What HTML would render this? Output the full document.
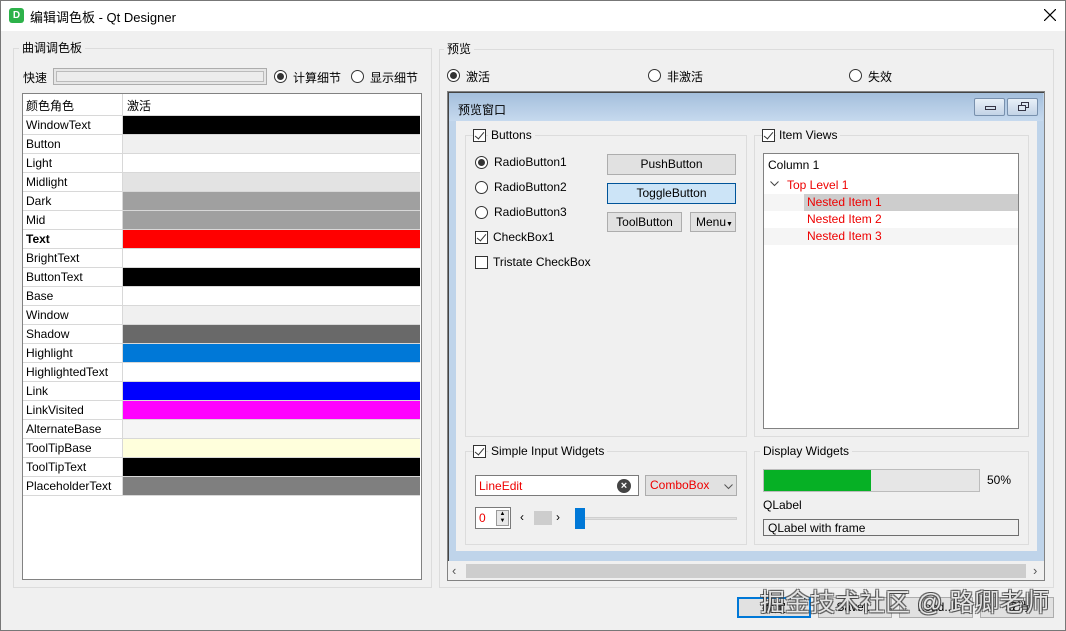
<!DOCTYPE html>
<html><head><meta charset="utf-8"><style>
*{box-sizing:border-box;margin:0;padding:0}
body{width:1066px;height:631px;background:#f0f0f0;font-family:"Liberation Sans","Noto Sans CJK SC",sans-serif;font-size:12px;color:#000;position:relative;overflow:hidden}
.a{position:absolute}
.grp{position:absolute;border:1px solid #dcdcdc}
.gt{position:absolute;background:#f0f0f0;padding:0 3px;font-size:12px;line-height:14px}
.rad{position:absolute;width:13px;height:13px;border:1px solid #333;border-radius:50%;background:#fff}
.rad.on::after{content:"";position:absolute;left:2px;top:2px;width:7px;height:7px;border-radius:50%;background:#333}
.chk{position:absolute;width:13px;height:13px;border:1px solid #333;background:#fff}
.chk.on::after{content:"";position:absolute;left:3px;top:0px;width:4px;height:8px;border:solid #333;border-width:0 1.5px 1.5px 0;transform:rotate(40deg)}
.btn{position:absolute;background:#e1e1e1;border:1px solid #adadad;text-align:center;font-size:12px}
.row{position:absolute;left:0;width:397px;height:19px;border-bottom:1px solid #d8d8d8}
.row span{position:absolute;left:3px;top:2px;font-size:12px}
.row i{position:absolute;left:99px;top:0;width:298px;height:18px;border-left:1px solid #d8d8d8}
.red{color:#e00}
</style></head><body>
<div class="a" style="left:0;top:0;width:1066px;height:631px;border:1px solid #777"></div>
<div class="a" style="left:1px;top:1px;width:1064px;height:30px;background:#fff"></div>
<div class="a" style="left:9px;top:8px;width:15px;height:15px;background:#2db24a;border-radius:3px;color:#fff;font-size:10px;text-align:center;line-height:15px;font-weight:bold">D</div>
<div class="a" style="left:30px;top:7px;font-size:13px">编辑调色板 - Qt Designer</div>
<svg class="a" style="left:1044px;top:9px" width="12" height="12"><path d="M0 0L12 12M12 0L0 12" stroke="#000" stroke-width="1.2"/></svg>

<div class="grp" style="left:13px;top:48px;width:419px;height:540px"></div>
<div class="gt" style="left:19px;top:41px">曲调调色板</div>
<div class="a" style="left:23px;top:69px">快速</div>
<div class="a" style="left:53px;top:68px;width:214px;height:17px;border:1px solid #adadad;background:#e6e6e6"><div style="margin:2px;height:11px;border:1px solid #bbb;background:#ececec"></div></div>
<div class="rad on" style="left:274px;top:70px"></div><div class="a" style="left:293px;top:69px">计算细节</div>
<div class="rad" style="left:351px;top:70px"></div><div class="a" style="left:370px;top:69px">显示细节</div>
<div class="a" style="left:22px;top:93px;width:400px;height:487px;border:1px solid #828282;background:#fff">
 <div class="row" style="top:0;height:22px;border-bottom:1px solid #d8d8d8"><span style="top:3px">颜色角色</span><i style="background:#fff;height:21px"></i><span style="left:104px;top:3px">激活</span></div>
 <div class="row" style="top:22px"><span>WindowText</span><i style="background:#000"></i></div>
 <div class="row" style="top:41px"><span>Button</span><i style="background:#f0f0f0"></i></div>
 <div class="row" style="top:60px"><span>Light</span><i style="background:#fff"></i></div>
 <div class="row" style="top:79px"><span>Midlight</span><i style="background:#e3e3e3"></i></div>
 <div class="row" style="top:98px"><span>Dark</span><i style="background:#a0a0a0"></i></div>
 <div class="row" style="top:117px"><span>Mid</span><i style="background:#a0a0a0"></i></div>
 <div class="row" style="top:136px"><span style="font-weight:bold">Text</span><i style="background:#f00"></i></div>
 <div class="row" style="top:155px"><span>BrightText</span><i style="background:#fff"></i></div>
 <div class="row" style="top:174px"><span>ButtonText</span><i style="background:#000"></i></div>
 <div class="row" style="top:193px"><span>Base</span><i style="background:#fff"></i></div>
 <div class="row" style="top:212px"><span>Window</span><i style="background:#f0f0f0"></i></div>
 <div class="row" style="top:231px"><span>Shadow</span><i style="background:#696969"></i></div>
 <div class="row" style="top:250px"><span>Highlight</span><i style="background:#0078d7"></i></div>
 <div class="row" style="top:269px"><span>HighlightedText</span><i style="background:#fff"></i></div>
 <div class="row" style="top:288px"><span>Link</span><i style="background:#0000ff"></i></div>
 <div class="row" style="top:307px"><span>LinkVisited</span><i style="background:#ff00ff"></i></div>
 <div class="row" style="top:326px"><span>AlternateBase</span><i style="background:#f5f5f5"></i></div>
 <div class="row" style="top:345px"><span>ToolTipBase</span><i style="background:#ffffdc"></i></div>
 <div class="row" style="top:364px"><span>ToolTipText</span><i style="background:#000"></i></div>
 <div class="row" style="top:383px"><span>PlaceholderText</span><i style="background:#7f7f7f"></i></div>
</div>

<div class="grp" style="left:439px;top:49px;width:615px;height:539px"></div>
<div class="gt" style="left:444px;top:42px">预览</div>
<div class="rad on" style="left:447px;top:69px"></div><div class="a" style="left:466px;top:68px">激活</div>
<div class="rad" style="left:648px;top:69px"></div><div class="a" style="left:667px;top:68px">非激活</div>
<div class="rad" style="left:849px;top:69px"></div><div class="a" style="left:868px;top:68px">失效</div>

<div class="a" style="left:447px;top:91px;width:598px;height:490px;border:1px solid #828282;background:#f0f0f0"></div>
<div class="a" style="left:448px;top:92px;width:596px;height:469px;border-top:1px solid #444;border-left:1px solid #444;background:#bfd4ea"></div>
<div class="a" style="left:449px;top:93px;width:594px;height:28px;background:linear-gradient(#a4bfdc,#c6d9ee)"></div>
<div class="a" style="left:458px;top:101px;font-size:12px">预览窗口</div>
<div class="a" style="left:974px;top:98px;width:31px;height:18px;border:1px solid #7890ad;border-radius:2px;background:linear-gradient(#e8f0f8,#c3d3e6)"><div style="position:absolute;left:10px;top:7px;width:11px;height:4px;border:1px solid #334"></div></div>
<div class="a" style="left:1007px;top:98px;width:31px;height:18px;border:1px solid #7890ad;border-radius:2px;background:linear-gradient(#e8f0f8,#c3d3e6)"><div style="position:absolute;left:13px;top:3px;width:8px;height:6px;border:1px solid #334"></div><div style="position:absolute;left:10px;top:6px;width:8px;height:6px;border:1px solid #334;background:#dde7f2"></div></div>
<div class="a" style="left:456px;top:121px;width:581px;height:430px;background:#f0f0f0"></div>

<div class="grp" style="left:465px;top:135px;width:282px;height:302px"></div>
<div class="chk on" style="left:473px;top:129px"></div><div class="gt" style="left:488px;top:128px">Buttons</div>
<div class="rad on" style="left:475px;top:156px"></div><div class="a" style="left:494px;top:155px">RadioButton1</div>
<div class="rad" style="left:475px;top:181px"></div><div class="a" style="left:494px;top:180px">RadioButton2</div>
<div class="rad" style="left:475px;top:206px"></div><div class="a" style="left:494px;top:205px">RadioButton3</div>
<div class="chk on" style="left:475px;top:231px"></div><div class="a" style="left:493px;top:230px">CheckBox1</div>
<div class="chk" style="left:475px;top:256px"></div><div class="a" style="left:493px;top:255px">Tristate CheckBox</div>
<div class="btn" style="left:607px;top:154px;width:129px;height:21px;line-height:19px">PushButton</div>
<div class="btn" style="left:607px;top:183px;width:129px;height:21px;line-height:19px;background:#cce4f7;border-color:#005499">ToggleButton</div>
<div class="btn" style="left:607px;top:212px;width:75px;height:20px;line-height:18px">ToolButton</div>
<div class="btn" style="left:690px;top:212px;width:46px;height:20px;line-height:18px;text-align:left;padding-left:5px">Menu<span style="font-size:7px">▼</span></div>

<div class="grp" style="left:754px;top:135px;width:275px;height:302px"></div>
<div class="chk on" style="left:762px;top:129px"></div><div class="gt" style="left:776px;top:128px">Item Views</div>
<div class="a" style="left:763px;top:153px;width:256px;height:276px;border:1px solid #828282;background:#fff">
 <div class="a" style="left:4px;top:4px">Column 1</div>
 <svg class="a" style="left:6px;top:27px" width="9" height="6"><path d="M0.5 0.5L4.5 4.5L8.5 0.5" stroke="#444" fill="none"/></svg>
 <div class="a red" style="left:23px;top:24px">Top Level 1</div>
 <div class="a" style="left:0;top:40px;width:254px;height:17px;background:#f5f5f5"></div>
 <div class="a" style="left:40px;top:40px;width:214px;height:17px;background:#cdcdcd"></div>
 <div class="a red" style="left:43px;top:41px">Nested Item 1</div>
 <div class="a red" style="left:43px;top:58px">Nested Item 2</div>
 <div class="a" style="left:0;top:74px;width:254px;height:17px;background:#f5f5f5"></div>
 <div class="a red" style="left:43px;top:75px">Nested Item 3</div>
</div>

<div class="grp" style="left:465px;top:451px;width:282px;height:94px"></div>
<div class="chk on" style="left:473px;top:445px"></div><div class="gt" style="left:488px;top:444px">Simple Input Widgets</div>
<div class="a" style="left:475px;top:475px;width:164px;height:21px;border:1px solid #7a7a7a;background:#fff"><span class="a red" style="left:3px;top:3px">LineEdit</span><div class="a" style="left:141px;top:3px;width:14px;height:14px;border-radius:50%;background:#444;color:#fff;font-size:11px;line-height:14px;text-align:center;font-weight:bold">×</div></div>
<div class="btn" style="left:645px;top:475px;width:92px;height:21px;text-align:left;padding-left:4px;line-height:19px"><span class="red">ComboBox</span><svg class="a" style="left:78px;top:8px" width="9" height="6"><path d="M0.5 0.5L4.5 4.5L8.5 0.5" stroke="#555" fill="none"/></svg></div>
<div class="a" style="left:475px;top:507px;width:36px;height:22px;border:1px solid #7a7a7a;background:#fff"><span class="a red" style="left:3px;top:3px">0</span><div class="a" style="left:20px;top:2px;width:13px;height:16px;border:1px solid #999;background:#e8e8e8;font-size:6px;line-height:7px;text-align:center">▲<br>▼</div></div>
<div class="a" style="left:520px;top:510px;font-size:12px">‹</div>
<div class="a" style="left:534px;top:511px;width:18px;height:14px;background:#cdcdcd"></div>
<div class="a" style="left:556px;top:510px;font-size:12px">›</div>
<div class="a" style="left:575px;top:517px;width:162px;height:3px;background:#e0e0e0;border:1px solid #d0d0d0"></div>
<div class="a" style="left:575px;top:508px;width:10px;height:21px;background:#0078d7"></div>

<div class="grp" style="left:754px;top:451px;width:275px;height:94px"></div>
<div class="gt" style="left:760px;top:444px">Display Widgets</div>
<div class="a" style="left:763px;top:469px;width:217px;height:23px;border:1px solid #bcbcbc;background:#e6e6e6"><div style="width:107px;height:21px;background:#06b025"></div></div>
<div class="a" style="left:987px;top:473px">50%</div>
<div class="a" style="left:763px;top:498px">QLabel</div>
<div class="a" style="left:763px;top:519px;width:256px;height:17px;border:1px solid #6e6e6e"><span class="a" style="left:4px;top:1px">QLabel with frame</span></div>

<div class="a" style="left:448px;top:562px;width:596px;height:18px;background:#f0f0f0"></div>
<div class="a" style="left:466px;top:564px;width:560px;height:14px;background:#cdcdcd"></div>
<div class="a" style="left:452px;top:563px;font-size:13px;color:#555">‹</div>
<div class="a" style="left:1033px;top:563px;font-size:13px;color:#555">›</div>

<div class="btn" style="left:737px;top:597px;width:74px;height:21px;line-height:19px;border:2px solid #0078d7">确定</div>
<div class="btn" style="left:818px;top:597px;width:74px;height:21px;line-height:19px">Save...</div>
<div class="btn" style="left:899px;top:597px;width:74px;height:21px;line-height:19px">Load...</div>
<div class="btn" style="left:980px;top:597px;width:74px;height:21px;line-height:19px">取消</div>
<div class="a" style="left:760px;top:583px;font-size:25px;color:rgba(255,255,255,0.85);white-space:nowrap;text-shadow:1px 1px 0 rgba(60,60,60,.7),-1px -1px 0 rgba(60,60,60,.7),1px -1px 0 rgba(60,60,60,.7),-1px 1px 0 rgba(60,60,60,.7)">掘金技术社区 @ 路卿老师</div>
</body></html>
